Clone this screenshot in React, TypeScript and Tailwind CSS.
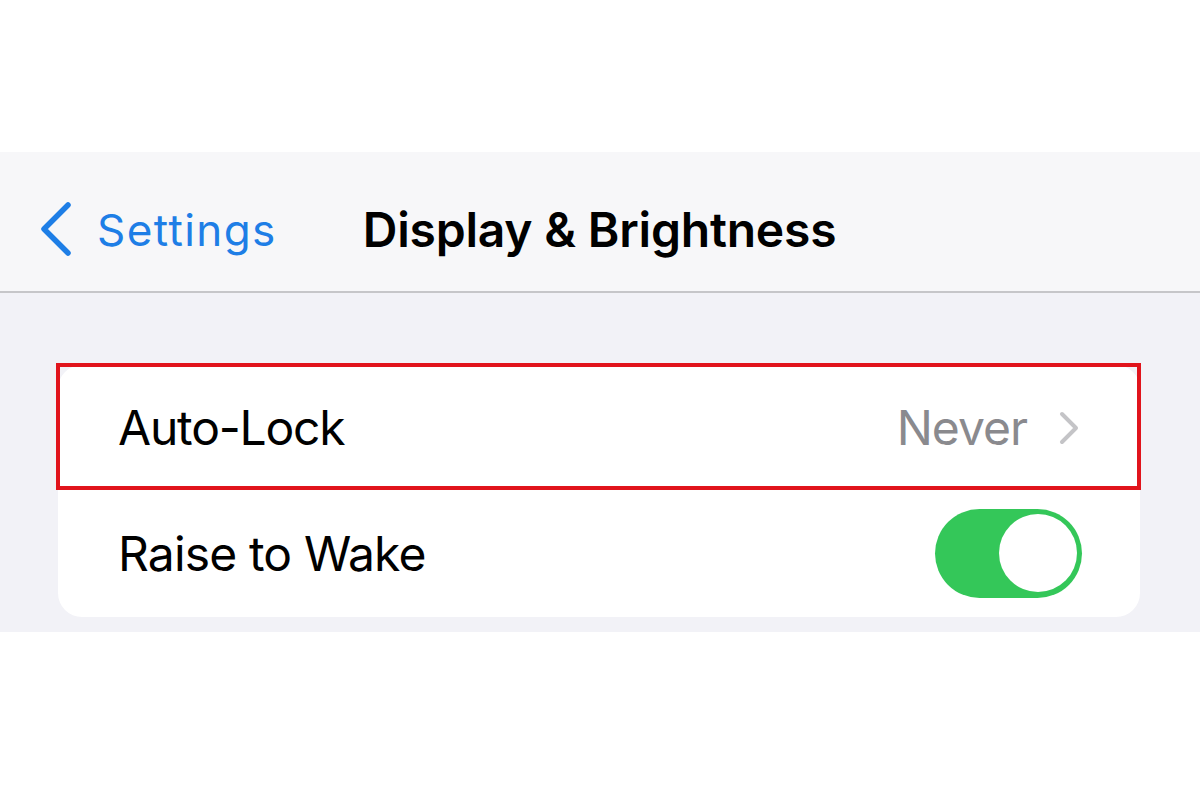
import React from "react";

export default function App() {
  const font = { fontFamily: "Inter, 'Noto Sans', sans-serif" };
  return (
    <div className="w-[1200px] h-[800px] bg-white flex flex-col" style={font}>
      <div className="h-[152px] bg-white" />
      <div className="h-[141px] bg-[#f7f7f9] border-b-2 border-[#c6c6c9] flex items-center pt-[16px]">
        <div className="flex items-center pl-[38px]">
          <svg width="34" height="56" viewBox="0 0 34 56" className="mt-[-2px]">
            <path d="M30 4 L6 28 L30 52" fill="none" stroke="#1e7ee6" strokeWidth="5.5" strokeLinecap="round" strokeLinejoin="round" />
          </svg>
          <span className="ml-[25px] text-[44px] leading-none text-[#1e7ee6] tracking-[1.4px]">Settings</span>
        </div>
        <div className="ml-[86px] text-[48px] leading-none font-semibold text-black tracking-[-0.2px]">Display &amp; Brightness</div>
      </div>
      <div className="h-[339px] bg-[#f2f2f7] pt-[72px] pl-[58px] pr-[60px]">
        <div className="bg-white rounded-[24px]">
          <div className="relative h-[125px] flex items-center pl-[60px] pr-[60px]">
            <span className="text-[48px] leading-none text-black tracking-[-1.2px]">Auto-Lock</span>
            <div className="ml-auto flex items-center">
              <span className="text-[48px] leading-none text-[#8a8a8e] tracking-[-1px]">Never</span>
              <svg width="22" height="34" viewBox="0 0 22 34" className="ml-[31px]">
                <path d="M4 3 L18 17 L4 31" fill="none" stroke="#c4c4c7" strokeWidth="4" strokeLinecap="round" strokeLinejoin="round" />
              </svg>
            </div>
            <div className="absolute -top-[2px] -left-[2px] -right-[1px] bottom-0 border-4 border-[#e1141c]" />
          </div>
          <div className="h-[127px] flex items-center pl-[60px] pr-[58px]">
            <span className="text-[48px] leading-none text-black tracking-[-0.85px]">Raise to Wake</span>
            <div className="ml-auto w-[147px] h-[89px] rounded-full bg-[#34c759] flex items-center justify-end pr-[5px] mt-[-1px]">
              <div className="w-[78px] h-[78px] rounded-full bg-white" />
            </div>
          </div>
        </div>
      </div>
      <div className="flex-1 bg-white" />
    </div>
  );
}
